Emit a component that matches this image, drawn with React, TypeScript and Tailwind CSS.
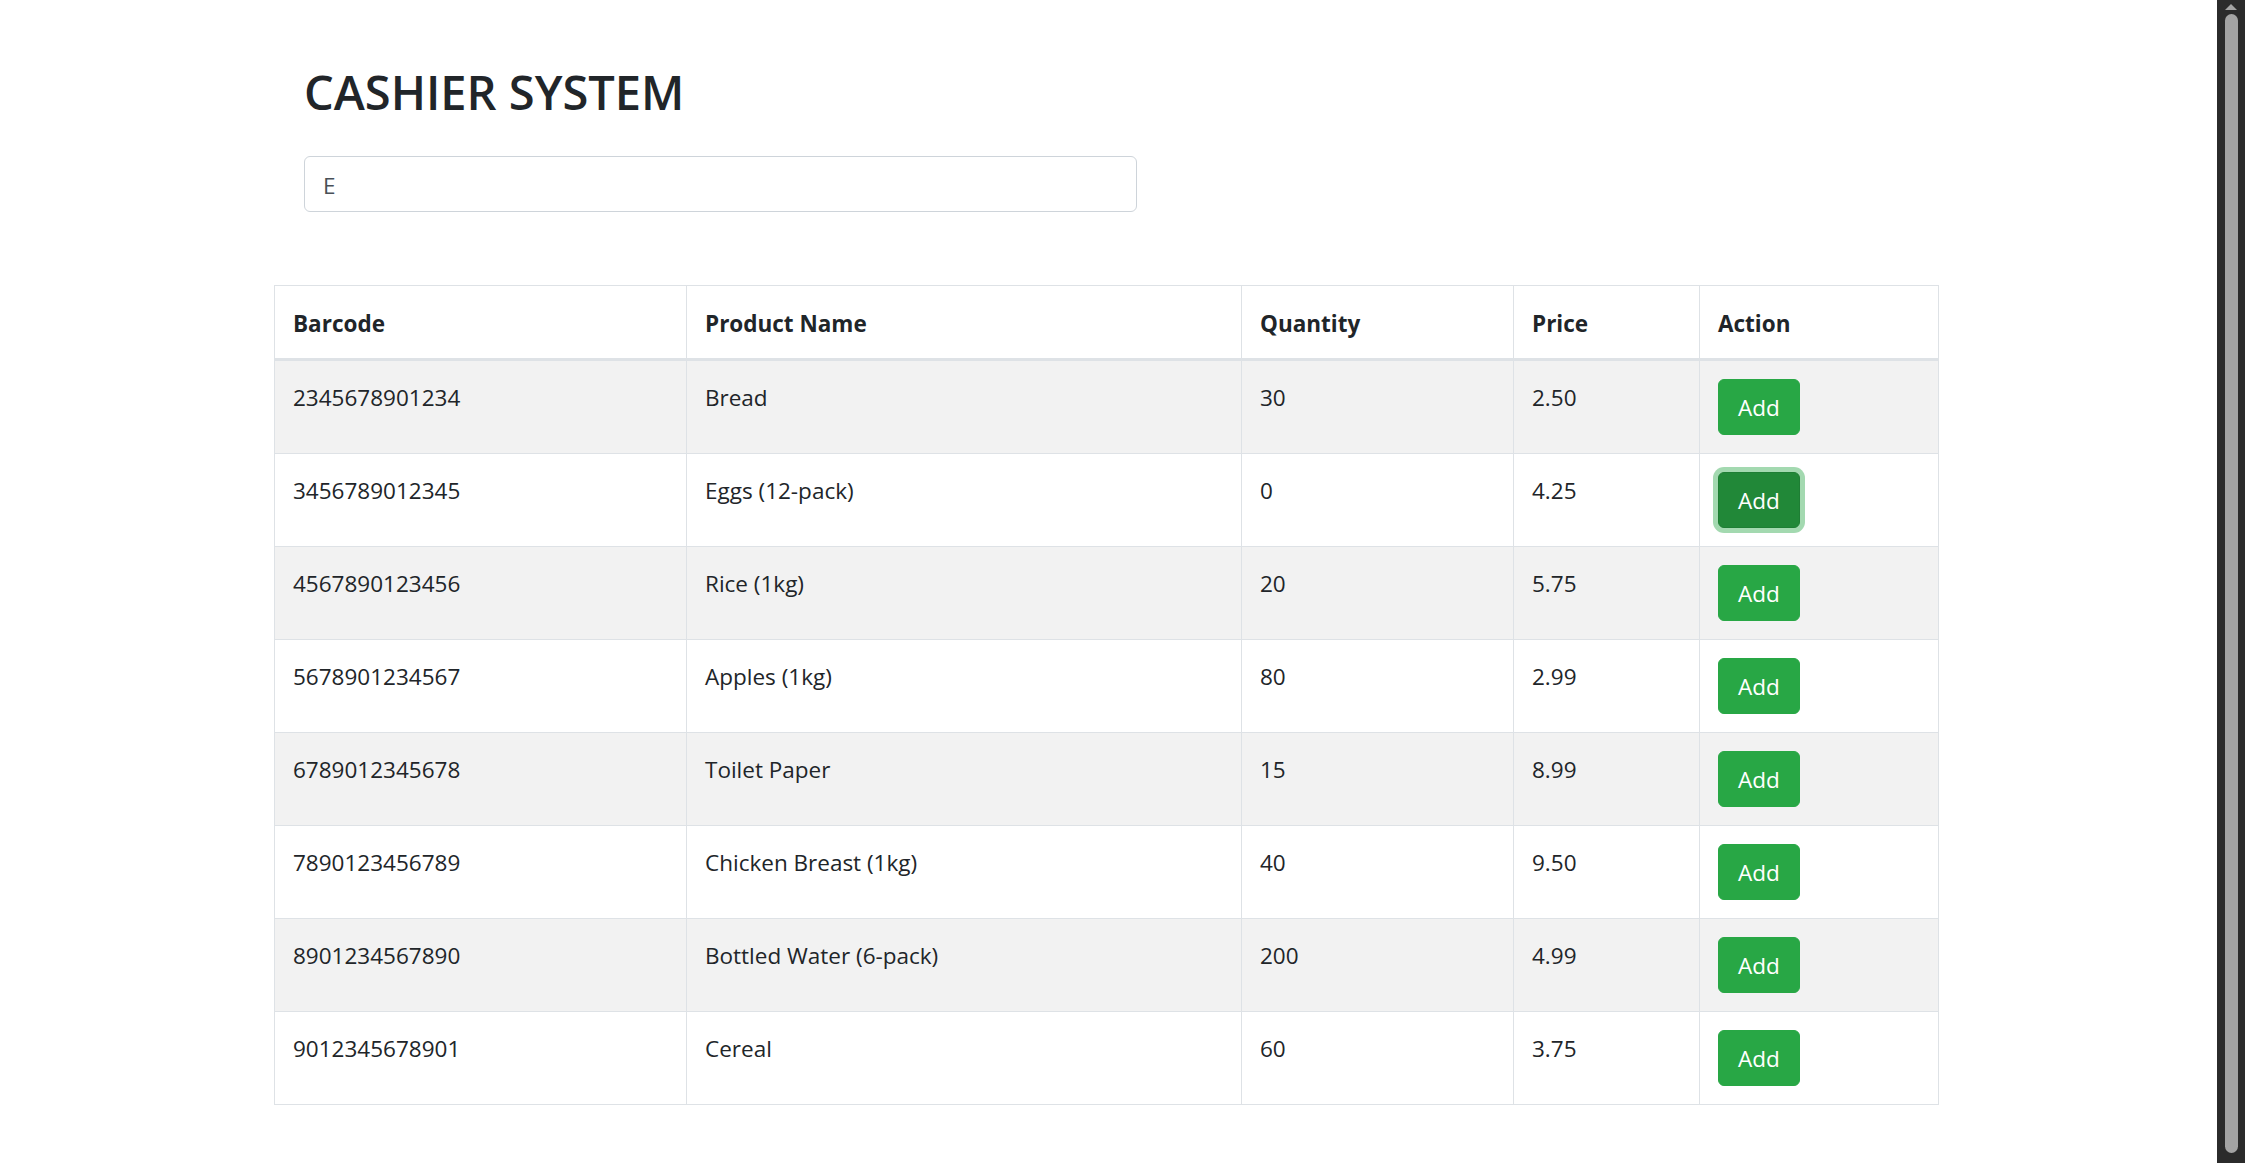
import React from "react";

interface Product {
  barcode: string;
  name: string;
  quantity: number;
  price: string;
}

const products: Product[] = [
  { barcode: "2345678901234", name: "Bread", quantity: 30, price: "2.50" },
  { barcode: "3456789012345", name: "Eggs (12-pack)", quantity: 0, price: "4.25" },
  { barcode: "4567890123456", name: "Rice (1kg)", quantity: 20, price: "5.75" },
  { barcode: "5678901234567", name: "Apples (1kg)", quantity: 80, price: "2.99" },
  { barcode: "6789012345678", name: "Toilet Paper", quantity: 15, price: "8.99" },
  { barcode: "7890123456789", name: "Chicken Breast (1kg)", quantity: 40, price: "9.50" },
  { barcode: "8901234567890", name: "Bottled Water (6-pack)", quantity: 200, price: "4.99" },
  { barcode: "9012345678901", name: "Cereal", quantity: 60, price: "3.75" },
];

const font = { fontFamily: '"Segoe UI", "Open Sans", "Noto Sans", sans-serif' };

function AddButton({ focused }: { focused?: boolean }) {
  return (
    <button
      className={
        focused
          ? "h-[56px] w-[82px] rounded-[6px] border border-[#1e7e34] bg-[#218838] pt-[2px] text-[22.5px] leading-[36px] text-white shadow-[0_0_0_5px_rgba(72,180,97,0.5)]"
          : "h-[56px] w-[82px] rounded-[6px] border border-[#28a745] bg-[#28a745] pt-[2px] text-[22.5px] leading-[36px] text-white"
      }
    >
      Add
    </button>
  );
}

function Scrollbar() {
  return (
    <div className="flex w-[28px] shrink-0 flex-col items-center bg-[#2b2b2b]">
      <div className="mt-[4px] h-0 w-0 border-x-[6px] border-b-[6px] border-x-transparent border-b-[#a3a3a3]" />
      <div className="mt-[4px] mb-[10px] w-[13px] flex-1 rounded-full bg-[#a3a3a3]" />
    </div>
  );
}

export default function App() {
  return (
    <div className="flex h-[1163px] overflow-hidden bg-white text-[#212529]" style={font}>
      <main className="flex-1 pl-[274px]">
        <div className="pl-[30px]">
          <h2 className="mt-[63px] text-[47px] font-semibold leading-[58px]">CASHIER SYSTEM</h2>
          <input
            readOnly
            value="E"
            className="mt-[35px] h-[56px] w-[833px] rounded-[6px] border border-[#ced4da] px-[18px] pt-[2px] text-[22.5px] text-[#495057] outline-none"
            style={font}
          />
        </div>

        <table className="mt-[73px] w-[1665px] table-fixed border-collapse border border-[#dee2e6] text-[22.5px] leading-[36px]">
          <thead>
            <tr>
              <th className="w-[412px] border border-b-[3px] border-[#dee2e6] px-[18px] pt-[20px] pb-[16px] text-left align-bottom font-bold">Barcode</th>
              <th className="w-[555px] border border-b-[3px] border-[#dee2e6] px-[18px] pt-[20px] pb-[16px] text-left align-bottom font-bold">Product Name</th>
              <th className="w-[272px] border border-b-[3px] border-[#dee2e6] px-[18px] pt-[20px] pb-[16px] text-left align-bottom font-bold">Quantity</th>
              <th className="w-[186px] border border-b-[3px] border-[#dee2e6] px-[18px] pt-[20px] pb-[16px] text-left align-bottom font-bold">Price</th>
              <th className="border border-b-[3px] border-[#dee2e6] px-[18px] pt-[20px] pb-[16px] text-left align-bottom font-bold">Action</th>
            </tr>
          </thead>
          <tbody>
            {products.map((p, i) => (
              <tr key={p.barcode} className={i % 2 === 0 ? "bg-[#f2f2f2]" : "bg-white"}>
                <td className="border border-[#dee2e6] px-[18px] pt-[19px] pb-[18px] align-top">{p.barcode}</td>
                <td className="border border-[#dee2e6] px-[18px] pt-[19px] pb-[18px] align-top">{p.name}</td>
                <td className="border border-[#dee2e6] px-[18px] pt-[19px] pb-[18px] align-top">{p.quantity}</td>
                <td className="border border-[#dee2e6] px-[18px] pt-[19px] pb-[18px] align-top">{p.price}</td>
                <td className="border border-[#dee2e6] p-[18px] align-top">
                  <AddButton focused={i === 1} />
                </td>
              </tr>
            ))}
          </tbody>
        </table>
      </main>
      <Scrollbar />
    </div>
  );
}
